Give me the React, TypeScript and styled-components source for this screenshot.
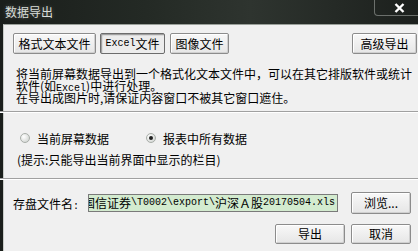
import React, { useState } from "react";
import styled, { createGlobalStyle, css } from "styled-components";

const GlobalStyle = createGlobalStyle`
  html, body {
    margin: 0;
    padding: 0;
    width: 418px;
    height: 251px;
    overflow: hidden;
    background: #1b201c;
  }
  * { box-sizing: border-box; }
`;

const cjk = `"Noto Sans CJK SC", "Noto Sans", sans-serif`;

const Window = styled.div`
  width: 418px;
  height: 251px;
  display: flex;
  flex-direction: column;
  background: linear-gradient(90deg, #1a1e1b 0%, #242a25 35%, #2e342f 60%, #1c201d 100%);
  font-family: ${cjk};
  font-size: 12px;
  color: #000;
`;

const TitleBar = styled.div`
  height: 24px;
  flex: none;
  display: flex;
  align-items: flex-start;
  padding-left: 5px;
`;

const Title = styled.div`
  margin-top: 4px;
  font-size: 12px;
  line-height: 16px;
  color: #d9ddd8;
  text-shadow: 0 0 4px rgba(255, 255, 255, 0.25);
`;

const CloseBox = styled.div`
  margin-left: auto;
  width: 44px;
  height: 16px;
  border: 1px solid rgba(200, 205, 200, 0.45);
  border-top: none;
  border-right: none;
  border-radius: 0 0 0 4px;
  display: flex;
  align-items: center;
  justify-content: center;
  padding-left: 6px;
`;

const Client = styled.div`
  flex: 1;
  margin-left: 3px;
  background: #f0f0f0;
  border-top: 1px solid #9aa09a;
  border-left: 1px solid #c8ccc8;
  display: flex;
  flex-direction: column;
`;

const TabRow = styled.div`
  margin-top: 8px;
  height: 21px;
  flex: none;
  display: flex;
  padding: 0 1px 0 9px;
`;

const buttonBase = css`
  height: 100%;
  display: flex;
  align-items: center;
  justify-content: center;
  font-family: ${cjk};
  font-size: 12px;
  line-height: 14px;
  color: #000;
  background: linear-gradient(#f8f8f8, #e6e6e6);
  border: 1px solid #8c8c8c;
  border-radius: 2px;
  box-shadow: inset 1px 1px 0 #ffffff, inset -1px -1px 0 #d0d0d0;
  padding: 0;
  white-space: nowrap;
`;

const ToggleButton = styled.button<{ $active?: boolean; $w: number; $gap?: number }>`
  ${buttonBase};
  width: ${(p) => p.$w}px;
  margin-right: ${(p) => p.$gap ?? 0}px;
  ${(p) =>
    p.$active &&
    css`
      background: #ececec;
      border-color: #6c6c6c;
      box-shadow: inset 1px 1px 0 #a0a0a0, inset 2px 2px 0 #dadada;
    `}
`;

const PushButton = styled.button<{ $w: number }>`
  ${buttonBase};
  width: ${(p) => p.$w}px;
`;

const Advanced = styled(PushButton)`
  margin-left: auto;
`;

const Latin = styled.span`
  font-family: "Liberation Mono", monospace;
  font-size: 10px;
  line-height: 1;
`;

const Desc = styled.div`
  margin-top: 14px;
  padding-left: 12px;
  flex: none;
`;

const DescLine = styled.div`
  height: 12px;
  line-height: 12px;
  white-space: nowrap;
  overflow: visible;
`;

const Separator = styled.div<{ $top: number }>`
  margin-top: ${(p) => p.$top}px;
  margin-left: -4px;
  height: 2px;
  flex: none;
  border-top: 1px solid #a0a0a0;
  border-bottom: 1px solid #ffffff;
`;

const RadioRow = styled.div`
  margin-top: 17px;
  height: 16px;
  flex: none;
  display: flex;
  align-items: center;
  padding-left: 16px;
`;

const RadioOption = styled.label<{ $w?: number }>`
  display: flex;
  align-items: center;
  width: ${(p) => (p.$w ? `${p.$w}px` : "auto")};
  cursor: default;
`;

const RadioDot = styled.span<{ $checked: boolean }>`
  width: 10px;
  height: 10px;
  border-radius: 50%;
  border: 1px solid #a9aea9;
  background: radial-gradient(circle at 35% 35%, #ffffff, #c9cdc9);
  margin-right: 7px;
  display: flex;
  align-items: center;
  justify-content: center;
  &::after {
    content: "";
    width: 4px;
    height: 4px;
    border-radius: 50%;
    background: ${(p) => (p.$checked ? "#202020" : "transparent")};
  }
`;

const Hint = styled.div`
  margin-top: 7px;
  padding-left: 13px;
  height: 14px;
  line-height: 14px;
  flex: none;
`;

const FileRow = styled.div`
  margin-top: 12px;
  height: 22px;
  flex: none;
  display: flex;
  align-items: center;
  padding-left: 9px;
`;

const FileLabel = styled.span`
  width: 75px;
  white-space: nowrap;
`;

const PathField = styled.div`
  width: 250px;
  height: 18px;
  background: #d3ebcf;
  border: 1px solid #7a7a7a;
  display: flex;
  justify-content: flex-end;
  align-items: center;
  overflow: hidden;
  white-space: nowrap;
  padding-right: 2px;
  margin-right: 13px;
  line-height: 14px;
`;

const ButtonRow = styled.div`
  margin-top: 10px;
  height: 20px;
  flex: none;
  display: flex;
  justify-content: flex-end;
  gap: 6px;
  padding-right: 7px;
`;

const FileRowButton = styled(PushButton)`
  height: 22px;
`;

export default function App() {
  const [tab, setTab] = useState(1);
  const [scope, setScope] = useState(1);
  const tabs = [
    { label: <>格式文本文件</>, w: 83, gap: 4 },
    { label: <><Latin>Excel</Latin>文件</>, w: 65, gap: 5 },
    { label: <>图像文件</>, w: 59, gap: 0 },
  ];
  return (
    <>
      <GlobalStyle />
      <Window>
        <TitleBar>
          <Title>数据导出</Title>
          <CloseBox>
            <svg width="11" height="10" viewBox="0 0 11 10">
              <path d="M1.5 1 L9.5 9 M9.5 1 L1.5 9" stroke="#ffffff" strokeWidth="2.4" />
            </svg>
          </CloseBox>
        </TitleBar>
        <Client>
          <TabRow>
            {tabs.map((t, i) => (
              <ToggleButton key={i} $w={t.w} $gap={t.gap} $active={tab === i} onClick={() => setTab(i)}>
                {t.label}
              </ToggleButton>
            ))}
            <Advanced $w={65}>高级导出</Advanced>
          </TabRow>
          <Desc>
            <DescLine>将当前屏幕数据导出到一个格式化文本文件中，可以在其它排版软件或统计</DescLine>
            <DescLine>
              软件(如<Latin>Excel</Latin>)中进行处理。
            </DescLine>
            <DescLine>在导出成图片时,请保证内容窗口不被其它窗口遮住。</DescLine>
          </Desc>
          <Separator $top={7} />
          <RadioRow>
            <RadioOption $w={126} onClick={() => setScope(0)}>
              <RadioDot $checked={scope === 0} />
              当前屏幕数据
            </RadioOption>
            <RadioOption onClick={() => setScope(1)}>
              <RadioDot $checked={scope === 1} />
              报表中所有数据
            </RadioOption>
          </RadioRow>
          <Hint>(提示:只能导出当前界面中显示的栏目)</Hint>
          <Separator $top={11} />
          <FileRow>
            <FileLabel>
              存盘文件名<Latin>:</Latin>
            </FileLabel>
            <PathField>
              <Latin>D:\</Latin>国信证券<Latin>\T0002\export\</Latin>沪深Ａ股<Latin>20170504.xls</Latin>
            </PathField>
            <FileRowButton $w={60}>浏览...</FileRowButton>
          </FileRow>
          <ButtonRow>
            <PushButton $w={70}>导出</PushButton>
            <PushButton $w={60}>取消</PushButton>
          </ButtonRow>
        </Client>
      </Window>
    </>
  );
}
